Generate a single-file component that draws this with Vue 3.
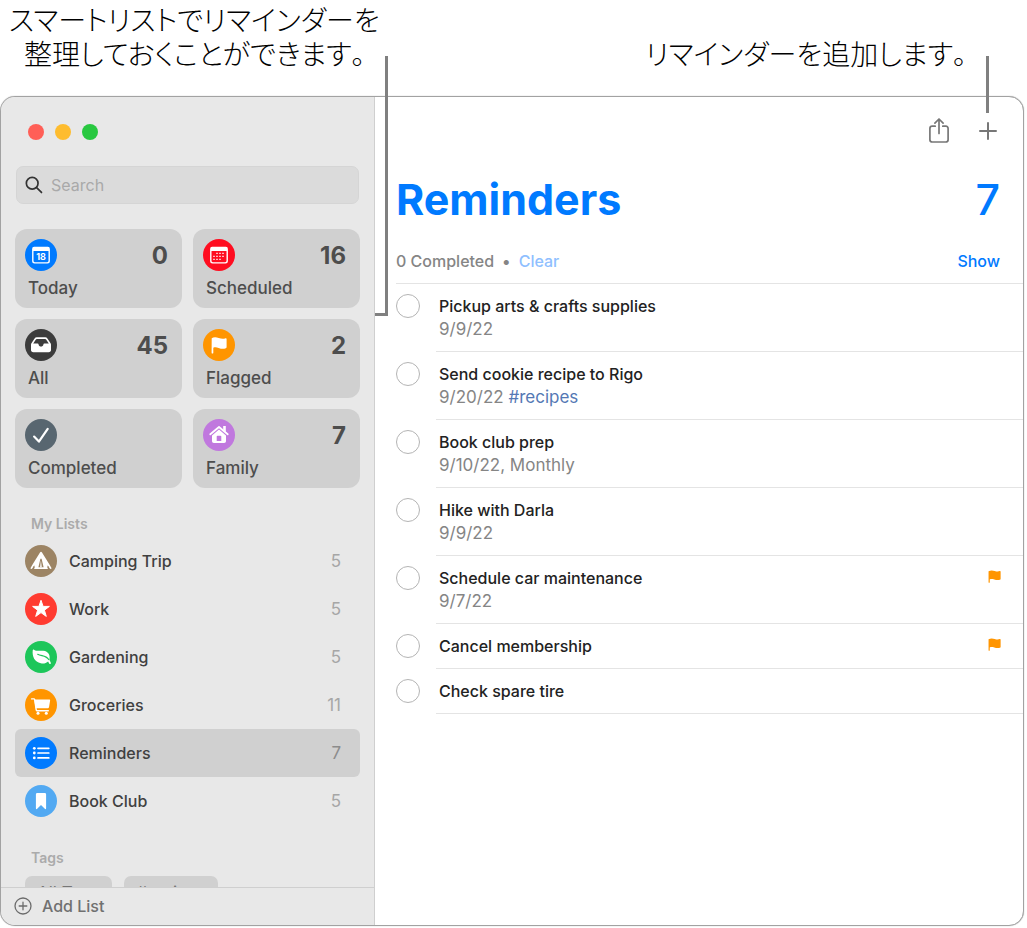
<script setup>
import { ref } from 'vue'

const search = ref('')
const selected = ref('Reminders')

const smartLists = [
  { name: 'Today', count: '0', icon: 'today', tone: 'blue' },
  { name: 'Scheduled', count: '16', icon: 'scheduled', tone: 'crimson' },
  { name: 'All', count: '45', icon: 'all', tone: 'dark' },
  { name: 'Flagged', count: '2', icon: 'flag', tone: 'orange' },
  { name: 'Completed', count: '', icon: 'check', tone: 'slate' },
  { name: 'Family', count: '7', icon: 'house', tone: 'purple' },
]

const lists = [
  { name: 'Camping Trip', count: 5, icon: 'tent', tone: 'brown' },
  { name: 'Work', count: 5, icon: 'star', tone: 'red' },
  { name: 'Gardening', count: 5, icon: 'leaf', tone: 'green' },
  { name: 'Groceries', count: 11, icon: 'cart', tone: 'orange' },
  { name: 'Reminders', count: 7, icon: 'list', tone: 'blue' },
  { name: 'Book Club', count: 5, icon: 'bookmark', tone: 'sky' },
]

const tags = ['All Tags', '#recipes']

const reminders = ref([
  { title: 'Pickup arts & crafts supplies', date: '9/9/22', done: false },
  { title: 'Send cookie recipe to Rigo', date: '9/20/22', tag: '#recipes', done: false },
  { title: 'Book club prep', date: '9/10/22, Monthly', done: false },
  { title: 'Hike with Darla', date: '9/9/22', done: false },
  { title: 'Schedule car maintenance', date: '9/7/22', flagged: true, done: false },
  { title: 'Cancel membership', flagged: true, done: false },
  { title: 'Check spare tire', done: false },
])

const glyphs = {
  scheduled:
    '<path fill="#fff" fill-rule="evenodd" d="M9.500 7.800h13A2.200 2.200 0 0 1 24.900 10v12.200a2.400 2.400 0 0 1-2.400 2.400h-13A2.400 2.400 0 0 1 7.100 22.200V10a2.200 2.200 0 0 1 2.400-2.200zM8.500 12v9.800c0 .9.500 1.400 1.400 1.400h12.200c.9 0 1.400-.5 1.400-1.400V12z"/><path stroke="#fff" stroke-width="1.400" stroke-dasharray="1.400 1.600" fill="none" d="M13.300 14.400h8M10.300 17.400h11M10.300 20.400h8"/>',
  all:
    '<path fill="#fff" fill-rule="evenodd" d="M11.800 8.300h8.400c1 0 1.700.4 2.200 1.200l3 4.400c.4.600.6 1.100.6 1.800v5.300c0 1.400-.9 2.200-2.300 2.200H8.300C6.900 23.200 6 22.400 6 21v-5.300c0-.7.2-1.200.6-1.800l3-4.400c.5-.8 1.200-1.200 2.200-1.200zM11.800 9.900c-.4 0-.7.200-.9.500l-2.700 4.200h4.500c.5 0 .8.300.9.800.3 1.400 1.100 2.200 2.400 2.200s2.100-.8 2.400-2.200c.1-.5.4-.8.9-.8h4.500l-2.700-4.200c-.2-.3-.5-.5-.9-.5z"/>',
  flag:
    '<path fill="#fff" d="M8.700 9.200c1.700-1 4.200-1.200 7-.2 2.700 1 4.800 1.100 6.800.3.600-.2 1.100 0 1.100.7v8.200c0 .5-.3.800-.8 1-2.200.9-4.400.7-7.200-.3-2.200-.8-3.900-.7-5.300-.2v5c0 .6-.3.900-.8.900s-.9-.3-.9-.9z"/>',
  check:
    '<path fill="none" stroke="#fff" stroke-width="2.200" stroke-linecap="round" stroke-linejoin="round" d="M9.100 17.600l4.800 5L22.700 9.800"/>',
  house:
    '<path fill="none" stroke="#fff" stroke-width="1.800" stroke-linecap="round" stroke-linejoin="round" d="M7.300 15.300L16 8l8.700 7.300"/><path fill="#fff" d="M20.200 7h2.600v6l-2.600-2.200z"/><path fill="#fff" fill-rule="evenodd" d="M16 10.500l7 5.900V22c0 1.200-.7 1.900-1.900 1.900H10.900C9.700 23.900 9 23.200 9 22v-5.600zM13.700 17.500V22h4.600v-4.500c0-.5-.3-.8-.8-.8h-3c-.5 0-.8.3-.8.800z"/>',
  tent:
    '<path fill="#fff" fill-rule="evenodd" d="M16 6.700c.4 0 .7.200 1 .7l7.300 11.800 2 3.500c.3.500.1 1-.3 1.200-.5.200-.9 0-1.200-.4l-2-2.900v3.300H9.200v-3.300l-2 2.900c-.3.400-.7.600-1.200.4-.4-.2-.6-.7-.3-1.200l2-3.500L15 7.400c.3-.5.6-.7 1-.7zm-.6 7.100l-2 8.500h5.200l-2-8.500z"/><path fill="#fff" d="M15.900 15.500l.9 6.800h-1.700z"/><path fill="#9c8464" d="M9.300 20.500l-.9 1.300 1.400 1.600zM22.700 20.500l.9 1.300-1.400 1.600z"/>',
  star:
    '<path fill="#fff" stroke="#fff" stroke-width="1" stroke-linejoin="round" d="M16 7.300l2.100 6.100h6.300l-5 3.800 1.900 6.200-5.300-3.800-5.300 3.800 1.900-6.200-5-3.800h6.300z"/>',
  leaf:
    '<path fill="#fff" d="M7.700 9.400c.2-.9.900-1 1.600-.5 2.400 1.500 5.500.6 8.900.9 5.300.6 7.300 4.400 6.200 9l1.300 2.700c.4.900-.1 1.600-.8 1.600-.5 0-.8-.5-1-1.100l-.8-1.600c-1.800 1.700-4.500 2.400-7.300 1.800C9.600 20.900 7.100 15.400 7.700 9.400z"/><path fill="none" stroke="#1dc65a" stroke-width="1.100" stroke-linecap="round" d="M12.700 13.300c3.700 2.100 8.300.5 11 5.300"/>',
  cart:
    '<path fill="#fff" d="M9.200 10.600h15c.7 0 1 .4.900 1l-1 6.200c-.2 1-.8 1.500-1.800 1.500H10.600z"/><path fill="none" stroke="#fff" stroke-width="1.400" stroke-linecap="round" stroke-linejoin="round" d="M6.600 9.900h2.200c.6 0 .8.200.9.700l1.500 10.200c.1.700.5 1 1.100 1h11"/><circle fill="#fff" cx="13" cy="24.200" r="1.500"/><circle fill="#fff" cx="21.300" cy="24.200" r="1.500"/>',
  list:
    '<path fill="none" stroke="#fff" stroke-width="1.700" stroke-linecap="round" d="M13 11.300h10.800M13 16h10.800M13 20.900h10.800"/><g fill="#fff"><circle cx="9.300" cy="11.300" r="1.400"/><circle cx="9.300" cy="16" r="1.400"/><circle cx="9.300" cy="20.900" r="1.400"/></g>',
  bookmark:
    '<path fill="#fff" d="M12.400 7.900h7.200c1 0 1.500.5 1.500 1.500v13.900c0 .9-.7 1.100-1.300.5L16 20.100l-3.800 3.700c-.6.6-1.300.4-1.300-.5V9.400c0-1 .5-1.500 1.500-1.500z"/>',
}
</script>

<template>
  <div class="page">
    <header class="callouts">
      <p class="callout">
        スマートリストでリマインダーを<br />整理しておくことができます<span class="stop">。</span>
      </p>
      <p class="callout">リマインダーを追加します<span class="stop">。</span></p>
    </header>
    <span class="leader leader-lists" aria-hidden="true"></span>
    <span class="leader leader-add" aria-hidden="true"></span>

    <div class="window">
      <aside class="sidebar">
        <div class="traffic">
          <button class="dot close" aria-label="Close"></button>
          <button class="dot minimize" aria-label="Minimize"></button>
          <button class="dot zoom" aria-label="Zoom"></button>
        </div>

        <label class="search">
          <svg viewBox="0 0 20 20" aria-hidden="true">
            <circle cx="8" cy="8" r="6.500" />
            <path d="M12.900 12.900l5.400 5.400" />
          </svg>
          <input v-model="search" type="search" placeholder="Search" aria-label="Search" />
        </label>

        <div class="cards">
          <button v-for="card in smartLists" :key="card.name" class="card">
            <span class="card-top">
              <span class="badge" :class="card.tone">
                <svg v-if="card.icon === 'today'" viewBox="0 0 32 32" aria-hidden="true">
                  <path
                    fill="#fff"
                    fill-rule="evenodd"
                    d="M9.500 7.800h13A2.200 2.200 0 0 1 24.900 10v12.200a2.400 2.400 0 0 1-2.400 2.400h-13A2.400 2.400 0 0 1 7.100 22.200V10a2.200 2.200 0 0 1 2.400-2.200zM8.500 12v9.800c0 .9.500 1.400 1.400 1.400h12.200c.9 0 1.400-.5 1.400-1.400V12z"
                  />
                  <text x="16" y="20.500" class="day">18</text>
                </svg>
                <svg v-else viewBox="0 0 32 32" aria-hidden="true" v-html="glyphs[card.icon]"></svg>
              </span>
              <span class="card-count">{{ card.count }}</span>
            </span>
            <span class="card-name">{{ card.name }}</span>
          </button>
        </div>

        <h2 class="heading">My Lists</h2>
        <nav class="lists">
          <button
            v-for="list in lists"
            :key="list.name"
            class="list"
            :class="{ active: selected === list.name }"
            @click="selected = list.name"
          >
            <span class="badge" :class="list.tone">
              <svg viewBox="0 0 32 32" aria-hidden="true" v-html="glyphs[list.icon]"></svg>
            </span>
            <span class="list-name">{{ list.name }}</span>
            <span class="list-count">{{ list.count }}</span>
          </button>
        </nav>

        <h2 class="heading tags-heading">Tags</h2>
        <div class="tags">
          <button v-for="tag in tags" :key="tag" class="tag">{{ tag }}</button>
        </div>

        <button class="add-list">
          <svg viewBox="0 0 18 18" aria-hidden="true">
            <circle cx="9" cy="9" r="8" />
            <path d="M9 5.200v7.600M5.200 9h7.600" />
          </svg>
          Add List
        </button>
      </aside>

      <main class="main">
        <div class="toolbar">
          <button class="tool" aria-label="Share">
            <svg viewBox="0 0 26 26" aria-hidden="true">
              <path d="M9.200 8.200H6.300C4.700 8.200 3.900 9 3.900 10.500v11.200c0 1.500.8 2.300 2.400 2.300h13.400c1.600 0 2.400-.8 2.400-2.300V10.500c0-1.500-.8-2.300-2.400-2.300h-2.900" />
              <path d="M13 15.500V1.100M8.900 5.100L13 1l4.100 4.100" />
            </svg>
          </button>
          <button class="tool" aria-label="Add reminder">
            <svg viewBox="0 0 26 26" aria-hidden="true">
              <path class="plus" d="M13 5v16M5 13h16" />
            </svg>
          </button>
        </div>

        <div class="title-row">
          <h1>Reminders</h1>
          <span class="total">7</span>
        </div>

        <div class="status">
          <span>0 Completed</span>
          <span>•</span>
          <button class="link clear">Clear</button>
          <button class="link show">Show</button>
        </div>

        <ul class="reminders">
          <li v-for="(item, i) in reminders" :key="item.title" class="reminder">
            <input :id="'item-' + i" v-model="item.done" type="checkbox" />
            <div class="body">
              <div class="text">
                <label :for="'item-' + i">{{ item.title }}</label>
                <p v-if="item.date">
                  {{ item.date }} <a v-if="item.tag" href="#recipes">{{ item.tag }}</a>
                </p>
              </div>
              <svg v-if="item.flagged" class="flag" viewBox="0 0 14 14" role="img" aria-label="Flagged">
                <path d="M.6 1.300C2.500.2 5 .3 7.200 1c2 .6 3.700.8 5.400.2.600-.2 1 0 1 .6v7.800c0 .5-.3.700-.8.900-1.900.6-3.900.4-6-.2-2-.6-3.600-.6-4.900-.2v3.100c0 .4-.2.600-.6.600s-.7-.2-.7-.6z" />
              </svg>
            </div>
          </li>
        </ul>
      </main>
    </div>
  </div>
</template>

<style>
body {
  margin: 0;
  background: #fff;
}
</style>

<style scoped>
.page {
  position: relative;
  display: flex;
  flex-direction: column;
  box-sizing: border-box;
  height: 100vh;
  padding: 0 3px 2px 0;
  font-family: Inter, "Noto Sans CJK JP", sans-serif;
  font-size: 16px;
  color: #222;
}

button {
  margin: 0;
  padding: 0;
  border: 0;
  background: none;
  font: inherit;
  color: inherit;
  text-align: left;
}

h1,
h2,
p,
ul {
  margin: 0;
  padding: 0;
}

.callouts {
  display: flex;
  justify-content: space-between;
  align-items: flex-end;
  box-sizing: border-box;
  height: 96px;
  padding: 0 43px 26px 9px;
}

.callout {
  font-family: "Noto Sans CJK JP", sans-serif;
  font-size: 28px;
  font-weight: 300;
  line-height: 34px;
  font-feature-settings: "palt";
  text-align: right;
  color: #000;
}

.stop {
  font-feature-settings: normal;
}

.leader {
  position: absolute;
  z-index: 2;
  box-sizing: border-box;
  border: 0 solid #808080;
}

.leader-lists {
  left: 375px;
  top: 56px;
  width: 13px;
  height: 260px;
  border-width: 0 3px 3px 0;
}

.leader-add {
  right: 38px;
  top: 56px;
  height: 57px;
  border-right-width: 3px;
}

.window {
  display: flex;
  flex: 1;
  min-height: 0;
  border: 1px solid #a2a2a2;
  border-radius: 15px;
  box-shadow: 0 0 1px #999;
  overflow: hidden;
  background: #fff;
}

.sidebar {
  display: flex;
  flex-direction: column;
  flex: 0 0 374px;
  box-sizing: border-box;
  min-height: 0;
  border-right: 1px solid #cfcfcf;
  background: #e8e8e8;
}

.traffic {
  display: flex;
  gap: 11px;
  padding: 27px 27px 26px;
}

.dot {
  width: 16px;
  height: 16px;
  border-radius: 50%;
}

.close { background: #ff5f57; }
.minimize { background: #febc2e; }
.zoom { background: #28c840; }

.search {
  display: flex;
  align-items: center;
  gap: 8px;
  box-sizing: border-box;
  height: 38px;
  margin: 0 15px 25px;
  padding: 0 8px;
  border: 1px solid #d5d5d5;
  border-radius: 7px;
  background: #dbdbdb;
}

.search svg {
  width: 18px;
  height: 18px;
  fill: none;
  stroke: #333;
  stroke-width: 1.9;
  stroke-linecap: round;
}

.search input {
  flex: 1;
  min-width: 0;
  padding: 0;
  border: 0;
  outline: 0;
  background: none;
  font: inherit;
  color: #333;
}

.search input::placeholder {
  color: #a9a9a9;
}

.cards {
  display: grid;
  grid-template-columns: 1fr 1fr;
  gap: 11px;
  padding: 0 14px;
}

.card {
  display: flex;
  flex-direction: column;
  box-sizing: border-box;
  height: 79px;
  padding: 10px 14px 0 10px;
  border-radius: 12px;
  background: #d0d0d0;
  color: #4d4d4d;
}

.card-top {
  display: flex;
  justify-content: space-between;
  align-items: flex-start;
  height: 34px;
}

.badge {
  flex: none;
  width: 32px;
  height: 32px;
  border-radius: 50%;
}

.badge svg {
  display: block;
  width: 32px;
  height: 32px;
}

.day {
  font-size: 9px;
  font-weight: 700;
  text-anchor: middle;
  fill: #fff;
}

.blue { background: #007aff; }
.crimson { background: #ff0d20; }
.dark { background: #3c3c3c; }
.orange { background: #ff9500; }
.slate { background: #586670; }
.purple { background: #c078de; }
.brown { background: #9c8464; }
.red { background: #ff3b30; }
.green { background: #1dc65a; }
.sky { background: #52a9f2; }

.card-count {
  font-size: 24px;
  font-weight: 700;
  line-height: 34px;
}

.card-name {
  padding: 3px 3px 0;
  font-size: 17px;
  font-weight: 500;
  line-height: 24px;
}

.heading {
  padding: 26px 30px 3px;
  font-size: 14px;
  font-weight: 600;
  line-height: 20px;
  color: #ababab;
}

.lists {
  display: flex;
  flex-direction: column;
  padding: 0 14px;
}

.list {
  display: flex;
  align-items: center;
  gap: 12px;
  height: 48px;
  padding: 0 19px 0 10px;
  border-radius: 6px;
  color: #404040;
}

.list.active {
  background: #d0d0d0;
}

.list-name {
  flex: 1;
  font-weight: 500;
}

.list-count {
  font-size: 17px;
  color: #a6a6a6;
}

.active .list-count {
  color: #8c8c8c;
}

.tags-heading {
  padding: 23px 30px 8px;
}

.tags {
  display: flex;
  flex: 1 1 0;
  gap: 12px;
  align-items: flex-start;
  min-height: 0;
  padding: 0 24px;
  overflow: hidden;
}

.tag {
  height: 34px;
  padding: 0 12px;
  border-radius: 7px;
  background: #d0d0d0;
  font-size: 17px;
  color: #777;
}

.add-list {
  display: flex;
  flex: none;
  align-items: center;
  gap: 10px;
  height: 38px;
  padding: 0 13px 2px;
  border-top: 1px solid #cfcfcf;
  font-weight: 500;
  color: #707070;
}

.add-list svg {
  width: 18px;
  height: 18px;
  fill: none;
  stroke: #6c6c6c;
  stroke-width: 1.3;
  stroke-linecap: round;
}

.main {
  flex: 1;
  min-width: 0;
  padding-left: 21px;
}

.toolbar {
  display: flex;
  justify-content: flex-end;
  gap: 23px;
  padding: 21px 22px 0 0;
}

.tool {
  width: 26px;
  height: 26px;
}

.tool svg {
  display: block;
  width: 26px;
  height: 26px;
  fill: none;
  stroke: #777;
  stroke-width: 1.7;
  stroke-linecap: round;
  stroke-linejoin: round;
}

.plus {
  stroke-width: 2;
}

.title-row {
  display: flex;
  justify-content: space-between;
  align-items: center;
  height: 60px;
  margin-top: 25px;
  padding-right: 23px;
  color: #007aff;
}

h1 {
  font-size: 43px;
  font-weight: 700;
  line-height: 60px;
}

.total {
  font-size: 43px;
  font-weight: 500;
  line-height: 60px;
}

.status {
  display: flex;
  align-items: center;
  gap: 8px;
  box-sizing: border-box;
  height: 55px;
  padding: 10px 23px 0 0;
  border-bottom: 1px solid #e4e4e4;
  font-weight: 500;
  color: #858585;
}

.clear {
  color: #8fbfff;
}

.show {
  margin-left: auto;
  color: #007aff;
}

.reminders {
  list-style: none;
}

.reminder {
  display: flex;
  gap: 16px;
}

.reminder input {
  flex: none;
  appearance: none;
  width: 24px;
  height: 24px;
  margin: 10px 0 0;
  border: 1px solid #b4b4b4;
  border-radius: 50%;
}

.reminder input:checked {
  background: #007aff;
}

.body {
  display: flex;
  flex: 1;
  justify-content: space-between;
  align-items: flex-start;
  padding: 11px 22px 10px 3px;
  border-bottom: 1px solid #e4e4e4;
  line-height: 23px;
}

.text label {
  display: block;
  font-weight: 500;
}

.text p {
  font-size: 17px;
  color: #858585;
}

.text a {
  color: #5478b4;
  text-decoration: none;
}

.flag {
  width: 13px;
  height: 13px;
  margin-top: 3px;
  fill: #ff9500;
}
</style>
